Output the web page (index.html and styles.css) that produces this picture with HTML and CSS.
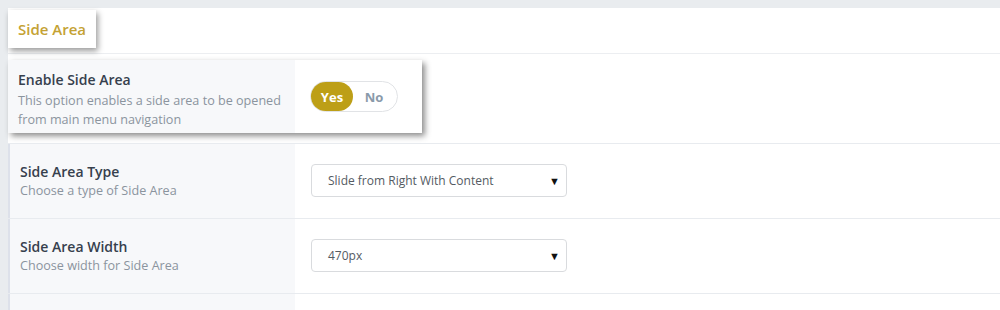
FILE: index.html
```html
<!DOCTYPE html>
<html lang="en">

<head>
    <meta charset="UTF-8">
    <meta name="viewport" content="width=device-width, initial-scale=1.0">
    <title>Side Area Options</title>
    <link rel="stylesheet" href="styles.css">
</head>

<body>
    <div id="options-panel">
        <div class="section-head">
            <div class="section-title">Side Area</div>
        </div>

        <div class="option-row active-row">
            <div class="option-card">
                <div class="option-label">
                    <div class="label-title">Enable Side Area</div>
                    <div class="label-desc">This option enables a side area to be opened from main menu navigation</div>
                </div>
                <div class="option-field">
                    <div class="toggle">
                        <span class="toggle-opt on">Yes</span>
                        <span class="toggle-opt">No</span>
                    </div>
                </div>
            </div>
        </div>

        <div class="option-row">
            <div class="option-label">
                <div class="label-title">Side Area Type</div>
                <div class="label-desc">Choose a type of Side Area</div>
            </div>
            <div class="option-field">
                <div class="select">
                    <span>Slide from Right With Content</span>
                    <span class="arrow">&#9660;</span>
                </div>
            </div>
        </div>

        <div class="option-row">
            <div class="option-label">
                <div class="label-title">Side Area Width</div>
                <div class="label-desc">Choose width for Side Area</div>
            </div>
            <div class="option-field">
                <div class="select">
                    <span>470px</span>
                    <span class="arrow">&#9660;</span>
                </div>
            </div>
        </div>

        <div class="option-row">
            <div class="option-label"></div>
            <div class="option-field"></div>
        </div>
    </div>
</body>

</html>
```

FILE: styles.css
```css
* {
    box-sizing: border-box;
}

body {
    margin: 0;
    padding: 8px 0 0 8px;
    font-family: "Open Sans", Arial, sans-serif;
    background-color: #e9ecef;
    height: 310px;
    overflow: hidden;
}

#options-panel {
    background-color: #fff;
    height: 100%;
}

.section-head {
    height: 46px;
    border-bottom: 1px solid #eceef1;
    padding-top: 2px;
}

.section-title {
    display: inline-block;
    height: 38px;
    line-height: 39px;
    padding: 0 10px;
    font-size: 15px;
    font-weight: 600;
    color: #c4a233;
    background-color: #fff;
    box-shadow: 2px 3px 6px rgba(0, 0, 0, 0.4);
}

.option-row {
    display: flex;
    height: 75px;
    border-bottom: 1px solid #e8ebef;
}

.option-row .option-label {
    width: 287px;
    background-color: #f7f8fa;
    border-left: 2px solid #dde1ea;
    padding: 18px 10px 0;
}

.option-row .option-label .label-desc {
    margin-top: -1px;
}

.option-row .option-field {
    flex: 1;
    display: flex;
    align-items: center;
    padding-left: 16px;
}

.active-row {
    height: 90px;
    padding-top: 6px;
}

.option-card {
    display: flex;
    height: 73px;
    box-shadow: 3px 3px 6px rgba(0, 0, 0, 0.45);
}

.option-card .option-label {
    width: 287px;
    border-left: none;
    padding: 10px 10px 0;
}

.option-card .option-label .label-desc {
    margin-top: 1px;
}

.option-card .option-field {
    width: 127px;
    flex: none;
    padding-left: 15px;
}

.label-title {
    font-size: 14px;
    font-weight: 600;
    color: #36404d;
    line-height: 20px;
}

.label-desc {
    font-size: 12.6px;
    color: #8b949e;
    line-height: 19px;
}

.toggle {
    display: flex;
    width: 88px;
    height: 31px;
    border: 1px solid #e1e3e6;
    border-radius: 16px;
}

.toggle-opt {
    width: 42px;
    line-height: 30px;
    text-align: center;
    font-size: 13px;
    font-weight: 700;
    color: #8a9aaa;
    border-radius: 15px;
}

.toggle-opt.on {
    background-color: #bd9f17;
    color: #fff;
}

.select {
    display: flex;
    justify-content: space-between;
    align-items: center;
    width: 256px;
    height: 33px;
    margin-top: -1px;
    border: 1px solid #d9dbde;
    border-radius: 4px;
    padding: 0 6px 0 16px;
    font-size: 12px;
    color: #545b63;
}

.arrow {
    font-size: 11px;
    color: #111;
}
```
